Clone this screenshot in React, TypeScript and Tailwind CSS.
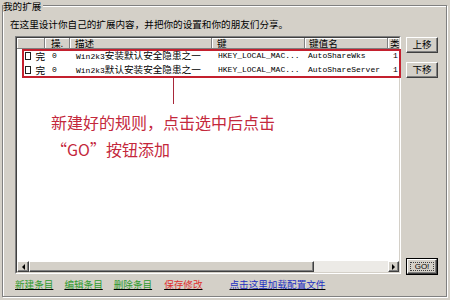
import React from "react";

const raised =
  "border border-t-white border-l-white border-r-[#404040] border-b-[#404040] shadow-[inset_-1px_-1px_0_#808080] bg-[#d4d0c8]";

function HeaderCell({ w, pl, children }: { w: string; pl: string; children?: React.ReactNode }) {
  return (
    <div
      className={`${w} ${pl} h-full shrink-0 flex items-center border-r border-r-[#808080] shadow-[inset_1px_1px_0_#fff] leading-[11px] whitespace-nowrap`}
    >
      {children}
    </div>
  );
}

function Row({ desc, descLatin, key2, name }: { desc: string; descLatin: string; key2: string; name: string }) {
  return (
    <div className="flex h-[14px] items-center whitespace-nowrap leading-[14px]">
      <div className="w-[28px] shrink-0 flex items-center pl-[8px]">
        <div className="w-[7px] h-[8px] border border-[#202020] bg-white" />
        <span className="ml-[4px]">完</span>
      </div>
      <div className="w-[25px] shrink-0 pl-[7px] font-['Liberation_Mono',monospace] text-[8px]">0</div>
      <div className="w-[142px] shrink-0 pl-[6px]">
        <span className="font-['Liberation_Mono',monospace] text-[8px]">{descLatin}</span>
        {desc}
      </div>
      <div className="w-[93px] shrink-0 pl-[6px] font-['Liberation_Mono',monospace] text-[8px]">{key2}</div>
      <div className="w-[83px] shrink-0 pl-[3px] font-['Liberation_Mono',monospace] text-[8px]">{name}</div>
      <div className="flex-1 pl-[5px] font-['Liberation_Mono',monospace] text-[8px]">1</div>
    </div>
  );
}

export default function App() {
  return (
    <div className="w-[450px] h-[300px] overflow-hidden bg-[#d4d0c8] text-black font-['Noto_Sans_CJK_SC',sans-serif] text-[9.6px]">
      {/* GROUP BOX */}
      <div className="relative ml-[2px] mt-[5px] w-[445px] h-[292px] border border-[#808080] shadow-[inset_1px_1px_0_#fff,1px_1px_0_#fff] pt-[11px] pl-[7px]">
        <div className="absolute -top-[6px] left-0 bg-[#d4d0c8] pr-[2px] leading-[12px]">我的扩展</div>

        <div className="h-[14px] leading-[14px]">在这里设计你自己的扩展内容，并把你的设置和你的朋友们分享。</div>

        <div className="flex mt-[5px] ml-[5px]">
          {/* LIST */}
          <div className="relative w-[386px] h-[238px] border border-t-[#808080] border-l-[#808080] border-r-white border-b-white">
            <div className="flex flex-col h-full border border-t-[#404040] border-l-[#404040] border-r-[#d4d0c8] border-b-[#d4d0c8] bg-white overflow-hidden">
              <div className="flex h-[11px] shrink-0 bg-[#d4d0c8] border-b border-b-[#808080]">
                <HeaderCell w="w-[28px]" pl="pl-0" />
                <HeaderCell w="w-[25px]" pl="pl-[6px]">操.</HeaderCell>
                <HeaderCell w="w-[142px]" pl="pl-[5px]">描述</HeaderCell>
                <HeaderCell w="w-[93px]" pl="pl-[5px]">键</HeaderCell>
                <HeaderCell w="w-[83px]" pl="pl-[4px]">键值名</HeaderCell>
                <HeaderCell w="w-[30px]" pl="pl-[2px]">类</HeaderCell>
              </div>

              <div className="flex-1">
                <Row descLatin="Win2k3" desc="安装默认安全隐患之一" key2="HKEY_LOCAL_MAC..." name="AutoShareWks" />
                <Row descLatin="Win2k3" desc="默认安装安全隐患之一" key2="HKEY_LOCAL_MAC..." name="AutoShareServer" />
              </div>

              {/* SCROLLBAR */}
              <div className="flex h-[11px] shrink-0">
                <div className={`${raised} w-[12px] flex items-center justify-center`}>
                  <div className="w-0 h-0 border-y-[3px] border-y-transparent border-r-[3px] border-r-black" />
                </div>
                <div className={`${raised} w-[285px]`} />
                <div className="flex-1 bg-[#eceae6]" />
                <div className={`${raised} w-[11px] flex items-center justify-center`}>
                  <div className="w-0 h-0 border-y-[3px] border-y-transparent border-l-[3px] border-l-black" />
                </div>
              </div>
            </div>

            {/* ANNOTATION */}
            <div className="absolute left-[6px] top-[12px] w-[379px] h-[29px] border-2 border-[#c4202e]" />
            <div className="absolute left-[157px] top-[41px] w-px h-[26px] bg-[#a8283a]" />
            <div className="absolute left-[35px] top-[72px] text-[16px] leading-[27px] text-[#c4283c] whitespace-nowrap">
              <div>新建好的规则，点击选中后点击</div>
              <div>“GO”按钮添加</div>
            </div>
          </div>

          {/* BUTTONS */}
          <div className="flex flex-col h-[239px] ml-[5px]">
            <div className={`${raised} w-[32px] h-[16px] mt-[1px] flex items-center justify-center leading-none`}>上移</div>
            <div className={`${raised} w-[32px] h-[16px] mt-[9px] flex items-center justify-center leading-none`}>下移</div>
            <div className="mt-auto w-[32px] h-[17px] border border-black">
              <div className={`${raised} w-full h-full flex items-center justify-center p-[2px]`}>
                <div className="w-full h-full border border-dotted border-[#404040] flex items-center justify-center font-['Liberation_Sans',sans-serif] text-[8px] leading-none">
                  GO!
                </div>
              </div>
            </div>
          </div>
        </div>

        {/* LINKS */}
        <div className="flex mt-[3px] ml-[5px] leading-[12px] underline">
          <span className="text-[#2e9a2e]">新建条目</span>
          <span className="ml-[11px] text-[#2e9a2e]">编辑条目</span>
          <span className="ml-[11px] text-[#2e9a2e]">删除条目</span>
          <span className="ml-[12px] text-[#e03030]">保存修改</span>
          <span className="ml-[27px] text-[#1c2fc0]">点击这里加载配置文件</span>
        </div>
      </div>
    </div>
  );
}
